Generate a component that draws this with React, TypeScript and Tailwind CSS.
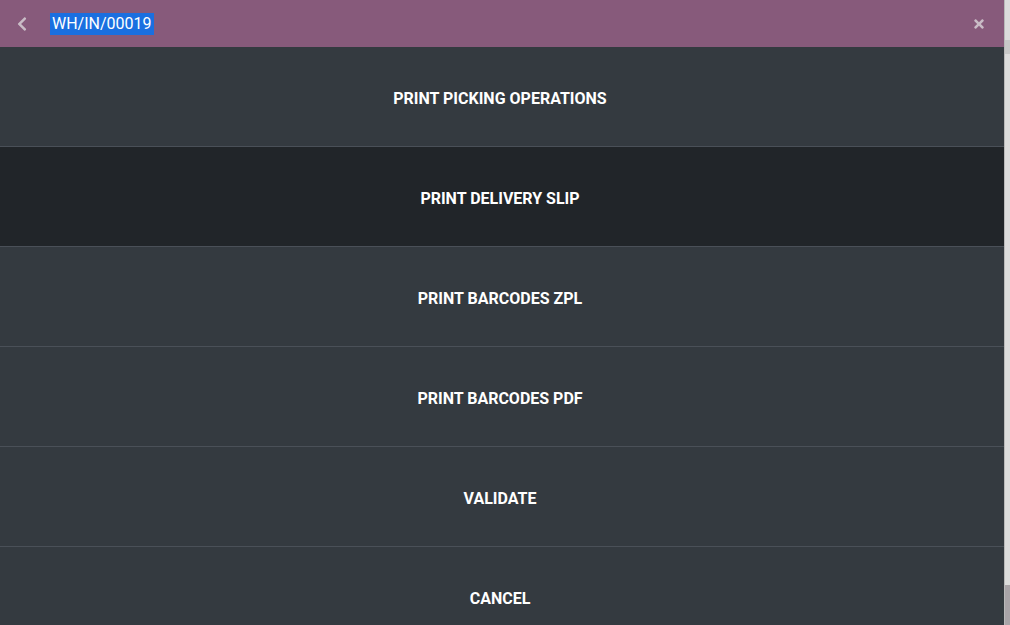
import { FaChevronLeft, FaTimes } from "react-icons/fa";

const actions = [
  { label: "Print Picking Operations", active: false },
  { label: "Print Delivery Slip", active: true },
  { label: "Print Barcodes ZPL", active: false },
  { label: "Print Barcodes PDF", active: false },
  { label: "Validate", active: false },
  { label: "Cancel", active: false },
];

function App() {
  return (
    <div className="flex h-[625px] w-[1010px] overflow-hidden font-['Roboto',sans-serif]">
      {/* Barcode action panel */}
      <div className="flex w-[1004px] flex-col bg-[#343a40]">
        {/* Header */}
        <div className="flex h-[47px] shrink-0 items-center bg-[#875a7b] pl-[14px] pr-[18px]">
          <FaChevronLeft className="h-[16px] w-[16px] text-[#c9bcc6]" />
          <span className="ml-[20px] bg-[#1a6fe0] px-[2px] py-[1px] text-[16px] leading-[20px] text-white">
            WH/IN/00019
          </span>
          <div className="flex-1" />
          <FaTimes className="h-[14px] w-[14px] text-[#c9bcc6]" />
        </div>

        {/* Action buttons */}
        <div className="flex flex-col">
          {actions.map((a) => (
            <div
              key={a.label}
              className={
                "flex h-[100px] shrink-0 items-center justify-center border-b border-[#4a5058] pr-[4px] pt-[4px] text-[16px] font-bold uppercase text-white " +
                (a.active ? "bg-[#212529]" : "bg-[#343a40]")
              }
            >
              {a.label}
            </div>
          ))}
        </div>
      </div>

      {/* Page behind the panel */}
      <div className="flex w-[6px] flex-col border-l border-[#b9b9b9] bg-[#dcdcdc]">
        <div className="mt-[40px] h-[14px] bg-[#c8c8c8]" />
        <div className="flex-1" />
        <div className="h-[40px] bg-[#a9a4a8]" />
      </div>
    </div>
  );
}

export default App;
